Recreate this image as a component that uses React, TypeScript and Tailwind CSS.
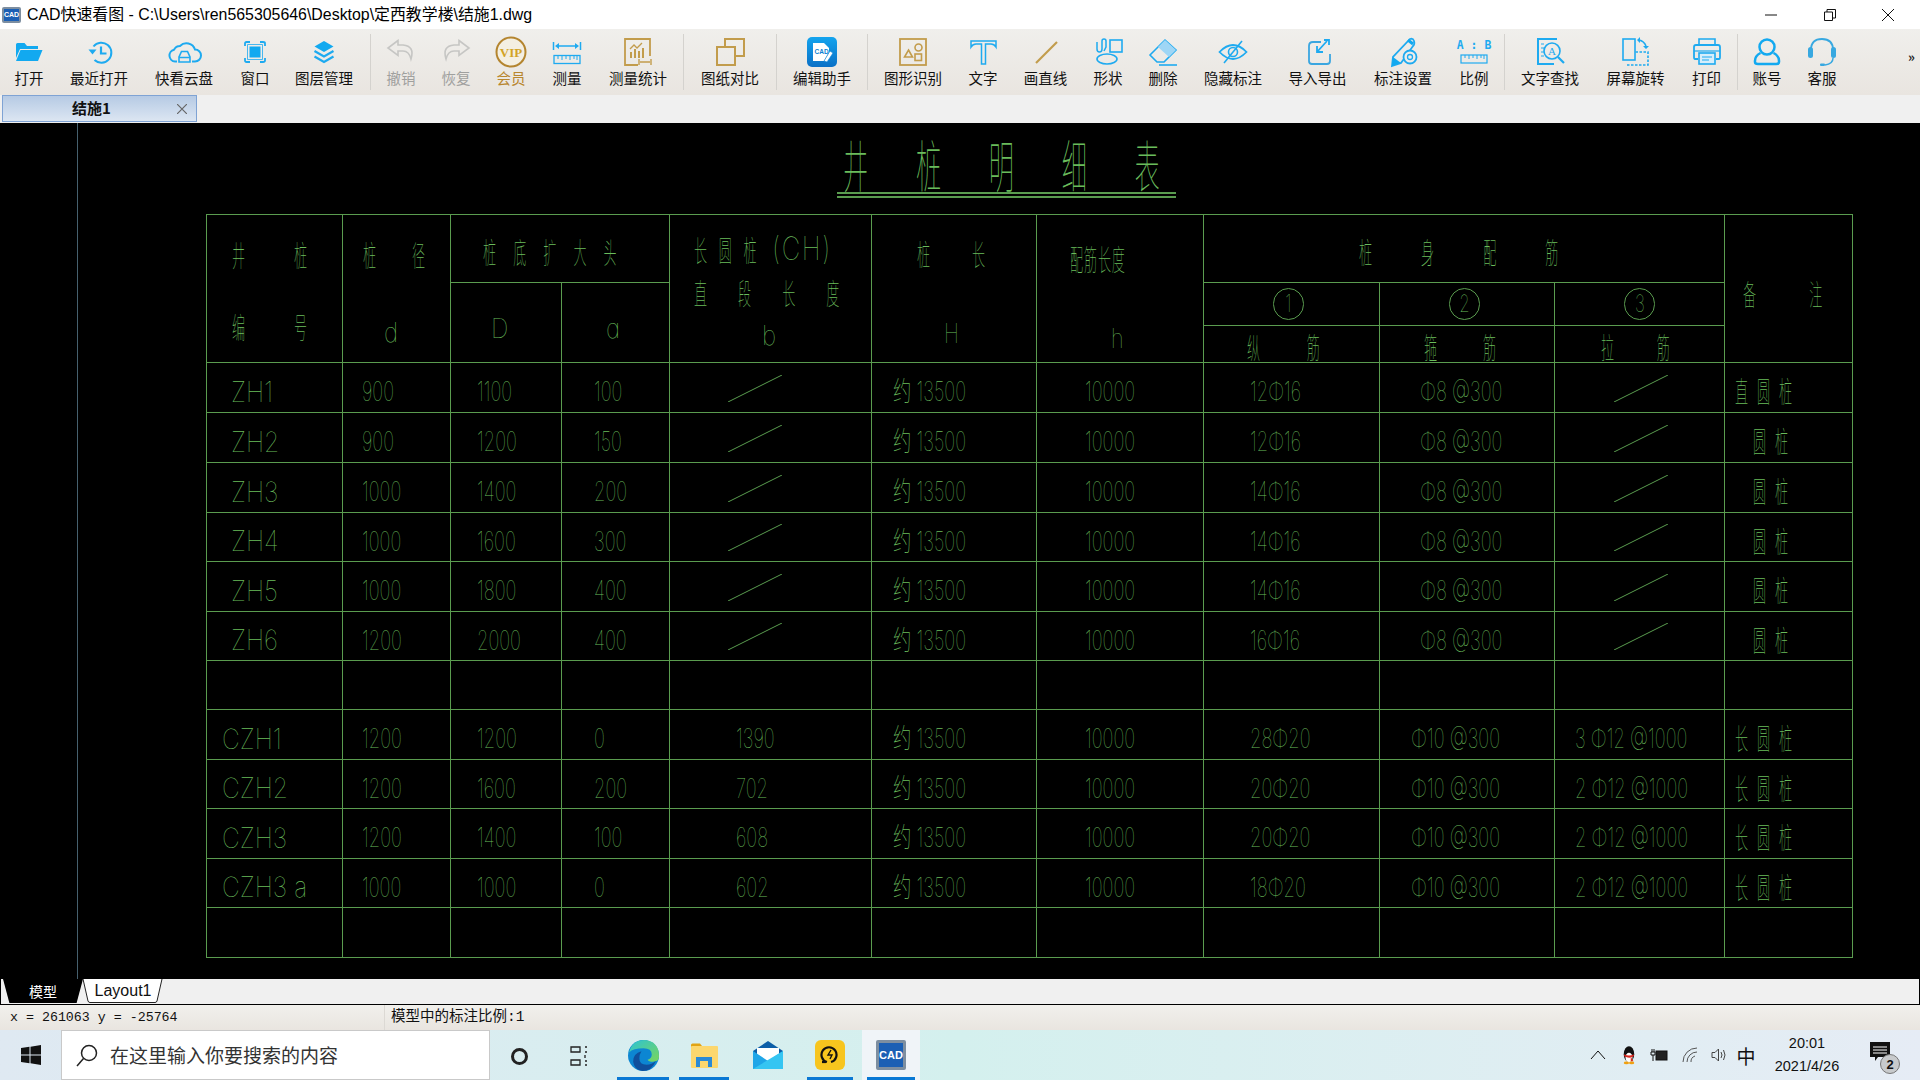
import React from "react";

const BLUE = "#1eaaf0";
const GOLD = "#c29c4c";
const GREY = "#c6c6c4";

const Ico = ({ children }: { children: React.ReactNode }) => (
  <svg viewBox="0 0 36 36" fill="none" className="w-9 h-9 shrink-0">
    {children}
  </svg>
);

const icons: Record<string, React.ReactNode> = {
  open: (
    <Ico>
      <path d="M5 10.500q0-1.500 1.500-1.500h7l2.500 3h11v3H9l-4 9z" fill="#12a9f0" />
      <path d="M9.500 16H31.500L27 27H5z" fill="#12a9f0" />
    </Ico>
  ),
  recent: (
    <Ico>
      <path d="M12.500 12.500A10 10 0 1 1 13.500 26" stroke={BLUE} strokeWidth="2" />
      <path d="M7.500 15.500h8l-4 5z" fill={BLUE} />
      <path d="M20 12.500v7h5.500" stroke={BLUE} strokeWidth="2.200" />
    </Ico>
  ),
  cloud: (
    <Ico>
      <path d="M11 27.500H9a6 6 0 0 1-1-11.800 7 7 0 0 1 6-3.700 9 9 0 0 1 15 3.500 6 6 0 0 1 0 12h-3" stroke={BLUE} strokeWidth="2" />
      <path d="M13 28v-5l2.500-5.500h6L24 23v5zM13 23.500h11" stroke={BLUE} strokeWidth="1.600" />
    </Ico>
  ),
  window: (
    <Ico>
      <rect x="12.500" y="12.500" width="11" height="11" fill="#12a9f0" />
      <path d="M8 12V9.500q0-1.500 1.500-1.500H13M23 8h3q2 0 2 1.500V12M28 24v2.500q0 1.500-2 1.500h-3M13 28H9.500Q8 28 8 26.500V24" stroke={BLUE} strokeWidth="1.800" />
      <path d="M10.500 10.500h15v15h-15z" stroke={BLUE} strokeWidth="0.800" />
    </Ico>
  ),
  layers: (
    <Ico>
      <path d="M18 7l9.500 5.500L18 18l-9.500-5.500z" fill="#12a9f0" />
      <path d="M8.500 17l9.500 5.500 9.500-5.500M8.500 22.500L18 28l9.500-5.500" stroke={BLUE} strokeWidth="2.200" />
    </Ico>
  ),
  undo: (
    <Ico>
      <path d="M15 6.500L5 14l10 7.500v-4.500h5q6 0 8 8 4-13-8-14h-5z" stroke={GREY} strokeWidth="1.600" />
    </Ico>
  ),
  redo: (
    <Ico>
      <path d="M21 6.500L31 14l-10 7.500v-4.500h-5q-6 0-8 8-4-13 8-14h5z" stroke={GREY} strokeWidth="1.600" />
    </Ico>
  ),
  vip: (
    <Ico>
      <circle cx="18" cy="18" r="14.500" fill="#f4efe2" stroke="#b4852f" strokeWidth="2" />
      <text x="18" y="22.500" textAnchor="middle" fontFamily="Liberation Serif" fontWeight="700" fontSize="13" fill="#d3a325">VIP</text>
    </Ico>
  ),
  measure: (
    <Ico>
      <path d="M4.500 8v8M31.500 8v8" stroke={BLUE} strokeWidth="1.500" />
      <path d="M9 12h18" stroke={BLUE} strokeWidth="1.500" />
      <path d="M6 12l4-3v6zM30 12l-4-3v6z" fill={BLUE} />
      <rect x="5" y="21.500" width="26" height="8" stroke={BLUE} strokeWidth="1.300" />
      <path d="M9 22v3M13 22v4M17 22v3M21 22v4M25 22v3M28 22v4" stroke={BLUE} />
    </Ico>
  ),
  stats: (
    <Ico>
      <path d="M30 22V5H5v26h13" stroke={GOLD} strokeWidth="1.800" />
      <path d="M10 15l4-4 3 3 5-5" stroke={GOLD} strokeWidth="1.300" />
      <path d="M10 18h2v6h-2zM14 15h2v9h-2zM18 17h2v7h-2zM22 14h2v10h-2z" fill={GOLD} />
      <path d="M19 25v6M31 25v6M20 28h10" stroke={GOLD} strokeWidth="1.400" />
    </Ico>
  ),
  compare: (
    <Ico>
      <path d="M13 13V5h19v17h-9" stroke={GOLD} strokeWidth="2" />
      <rect x="5" y="13" width="18" height="18" stroke={GOLD} strokeWidth="2" />
    </Ico>
  ),
  edit: (
    <Ico>
      <defs>
        <linearGradient id="ed" x1="0" y1="0" x2="0" y2="1">
          <stop offset="0" stopColor="#14a4ee" />
          <stop offset="1" stopColor="#0a70c6" />
        </linearGradient>
      </defs>
      <rect x="3" y="3" width="30" height="30" rx="5" fill="url(#ed)" />
      <path d="M9 9h11l5 5v4l-5 9H9z" fill="#fff" />
      <text x="10.500" y="20" fontFamily="Liberation Sans" fontWeight="700" fontSize="6.500" fill="#0b7fd4">CAD</text>
      <path d="M20 27l6-10 3 2-6 9z" fill="#fff" stroke="#0b7fd4" strokeWidth="0.600" />
    </Ico>
  ),
  recog: (
    <Ico>
      <rect x="5" y="5" width="26" height="26" stroke={GOLD} strokeWidth="1.800" />
      <path d="M13.500 16l4 7h-8z" stroke={GOLD} strokeWidth="1.600" />
      <circle cx="23.500" cy="13.500" r="3.500" stroke={GOLD} strokeWidth="1.600" />
      <rect x="20" y="20" width="6.500" height="6.500" stroke={GOLD} strokeWidth="1.600" />
    </Ico>
  ),
  text: (
    <Ico>
      <path d="M6 7h25v6q-2-3-5-3h-5.500v20h-4V10H11q-3 0-5 3z" stroke={BLUE} strokeWidth="1.500" />
    </Ico>
  ),
  line: (
    <Ico>
      <path d="M8 29L29 8" stroke={GOLD} strokeWidth="2.200" />
    </Ico>
  ),
  shape: (
    <Ico>
      <rect x="20" y="6" width="12" height="12" stroke={BLUE} strokeWidth="1.600" />
      <ellipse cx="17" cy="25" rx="10" ry="5" stroke={BLUE} strokeWidth="1.600" />
      <path d="M7 8v7q0 3 2.500 3t2.500-3V7q0-2 2-2t2 2v6l-2 4" stroke={BLUE} strokeWidth="1.500" />
    </Ico>
  ),
  erase: (
    <Ico>
      <path d="M5 21L20 6l11 10-12 12h-7z" stroke={BLUE} strokeWidth="1.600" />
      <path d="M13 13L20 6l11 10-7 7z" fill="#9fd6f5" />
      <path d="M14 31h18" stroke={BLUE} strokeWidth="1.600" />
    </Ico>
  ),
  hide: (
    <Ico>
      <path d="M4.500 18Q18 4 31.500 18 18 32 4.500 18z" stroke={BLUE} strokeWidth="1.800" />
      <circle cx="18" cy="18" r="4.500" stroke={BLUE} strokeWidth="1.600" />
      <path d="M9 29L27 7" stroke={BLUE} strokeWidth="1.600" />
    </Ico>
  ),
  io: (
    <Ico>
      <path d="M21 8h-8q-4 0-4 4v15q0 3 3 3h15q3 0 3-3v-7" stroke="#3aa6e0" strokeWidth="1.800" />
      <path d="M27 7L17 18M17 12v6h6M24 6h5v5" stroke={BLUE} strokeWidth="1.800" />
    </Ico>
  ),
  mark: (
    <Ico>
      <path d="M25 5q3-1 4 2t-1 5L16 29l-9 3 1-9z" stroke={BLUE} strokeWidth="1.800" />
      <path d="M7 32l1-9 8 6z" fill="#12a9f0" />
      <path d="M23 6l5 4" stroke="#12a9f0" strokeWidth="3" />
      <circle cx="25" cy="23" r="6.500" fill="#efedea" stroke={BLUE} strokeWidth="1.800" />
      <circle cx="25" cy="23" r="2.500" stroke={BLUE} strokeWidth="1.300" />
    </Ico>
  ),
  ratio: (
    <Ico>
      <text x="18" y="15" textAnchor="middle" fontFamily="DejaVu Sans Mono" fontWeight="700" fontSize="11.500" fill={BLUE}>A : B</text>
      <rect x="5" y="21" width="26" height="8" stroke={BLUE} strokeWidth="1.200" />
      <path d="M9 21v3M13 21v4M17 21v3M21 21v4M25 21v3M28 21v4" stroke={BLUE} />
    </Ico>
  ),
  find: (
    <Ico>
      <path d="M25 5H6v25h16" stroke={BLUE} strokeWidth="2" />
      <path d="M9 10h3M9 14h3M9 18h3M9 22h3" stroke={BLUE} />
      <circle cx="20" cy="17" r="8" stroke={BLUE} strokeWidth="1.600" />
      <text x="20" y="21" textAnchor="middle" fontFamily="Liberation Serif" fontSize="11" fill={BLUE}>A</text>
      <path d="M26 23l6 6" stroke={BLUE} strokeWidth="2.200" />
    </Ico>
  ),
  rotate: (
    <Ico>
      <rect x="5" y="5" width="12" height="21" stroke={BLUE} strokeWidth="1.600" />
      <path d="M9 31h21V18H17" stroke={BLUE} strokeWidth="1.600" strokeDasharray="2.500 1.500" />
      <path d="M21 6q5 1 7 6" stroke={BLUE} strokeWidth="1.600" />
      <path d="M25 12h6l-3 3zM22 3v6l-3-3z" fill={BLUE} />
    </Ico>
  ),
  print: (
    <Ico>
      <path d="M10 11V5h16v6" stroke={BLUE} strokeWidth="1.600" />
      <path d="M9 25H6q-1 0-1-2V13q0-2 2-2h22q2 0 2 2v10q0 2-1 2h-3" stroke={BLUE} strokeWidth="1.800" />
      <path d="M5 17h26" stroke={BLUE} strokeWidth="1.200" />
      <rect x="10" y="19" width="16" height="11" fill="#d6eefb" stroke={BLUE} strokeWidth="1.600" />
      <path d="M13 23h10M13 26h7" stroke={BLUE} />
    </Ico>
  ),
  user: (
    <Ico>
      <circle cx="18" cy="13" r="7.500" stroke="#12a9f0" strokeWidth="2.500" />
      <path d="M11.500 19q-6 3-5.500 9 0 2 3 2h18q3 0 3-2 .5-6-5.500-9" stroke="#12a9f0" strokeWidth="2.500" />
    </Ico>
  ),
  service: (
    <Ico>
      <path d="M7 16Q7 5 18 5t11 11" stroke="#38a8e0" strokeWidth="1.800" />
      <rect x="4" y="13" width="5" height="11" rx="2.500" fill="#38a8e0" />
      <rect x="27" y="13" width="5" height="11" rx="2.500" fill="#38a8e0" />
      <path d="M29 24q0 6-8 7" stroke="#38a8e0" strokeWidth="1.500" />
      <rect x="16" y="29.500" width="5" height="2.500" rx="1" fill="#38a8e0" />
    </Ico>
  ),
};

type Tool = { label: string; icon: string; w: string; tone?: string; sep?: boolean };

const tools: Tool[] = [
  { label: "打开", icon: "open", w: "w-[58px]" },
  { label: "最近打开", icon: "recent", w: "w-[82px]" },
  { label: "快看云盘", icon: "cloud", w: "w-[88px]" },
  { label: "窗口", icon: "window", w: "w-[54px]" },
  { label: "图层管理", icon: "layers", w: "w-[84px]", sep: true },
  { label: "撤销", icon: "undo", w: "w-[52px]", tone: "text-[#a0a09e]" },
  { label: "恢复", icon: "redo", w: "w-[58px]", tone: "text-[#a0a09e]" },
  { label: "会员", icon: "vip", w: "w-[52px]", tone: "text-[#b8862f]" },
  { label: "测量", icon: "measure", w: "w-[60px]" },
  { label: "测量统计", icon: "stats", w: "w-[82px]", sep: true },
  { label: "图纸对比", icon: "compare", w: "w-[84px]", sep: true },
  { label: "编辑助手", icon: "edit", w: "w-[82px]", sep: true },
  { label: "图形识别", icon: "recog", w: "w-[82px]" },
  { label: "文字", icon: "text", w: "w-[58px]" },
  { label: "画直线", icon: "line", w: "w-[67px]" },
  { label: "形状", icon: "shape", w: "w-[58px]" },
  { label: "删除", icon: "erase", w: "w-[52px]" },
  { label: "隐藏标注", icon: "hide", w: "w-[88px]" },
  { label: "导入导出", icon: "io", w: "w-[81px]" },
  { label: "标注设置", icon: "mark", w: "w-[90px]" },
  { label: "比例", icon: "ratio", w: "w-[52px]", sep: true },
  { label: "文字查找", icon: "find", w: "w-[82px]" },
  { label: "屏幕旋转", icon: "rotate", w: "w-[89px]" },
  { label: "打印", icon: "print", w: "w-[53px]", sep: true },
  { label: "账号", icon: "user", w: "w-[50px]" },
  { label: "客服", icon: "service", w: "w-[60px]" },
];

const CadLogo = ({ className, text }: { className: string; text: string }) => (
  <div className={`flex items-center justify-center bg-[#1b5fb4] border-2 border-[#7d8ea0] rounded-[2px] text-white font-bold font-['Liberation_Sans',sans-serif] ${className}`}>
    <span className={text}>CAD</span>
  </div>
);

const TitleBar = () => (
  <div className="h-[29px] bg-white flex items-center">
    <CadLogo className="w-[19px] h-[16px] ml-[2px]" text="text-[7px] leading-none" />
    <span className="ml-[6px] text-[15.900px] text-black font-['Liberation_Sans','Noto_Sans_CJK_SC',sans-serif]">
      CAD快速看图 - C:\Users\ren565305646\Desktop\定西教学楼\结施1.dwg
    </span>
    <div className="ml-auto flex items-center">
      <svg viewBox="0 0 12 12" className="w-3 h-3 mr-[47px]"><path d="M0 6h12" stroke="#111" /></svg>
      <svg viewBox="0 0 12 12" className="w-3 h-3 mr-[46px]"><path d="M.5 3h8v8.500h-8zM3 3V.5h8.500V9H9" stroke="#111" fill="none" /></svg>
      <svg viewBox="0 0 12 12" className="w-3 h-3 mr-[26px]"><path d="M0 0l12 12M12 0L0 12" stroke="#111" /></svg>
    </div>
  </div>
);

const Toolbar = () => (
  <div className="h-[66px] flex bg-gradient-to-b from-[#f0efec] to-[#e9e5e0] font-['Noto_Sans_CJK_SC',sans-serif]">
    {tools.map((t) => (
      <React.Fragment key={t.label}>
        <div className={`${t.w} shrink-0 flex flex-col items-center pt-[5px]`}>
          {icons[t.icon]}
          <span className={`text-[14.500px] leading-[16px] whitespace-nowrap ${t.tone ?? "text-[#111]"}`}>{t.label}</span>
        </div>
        {t.sep && <div className="w-px mx-[4px] my-[5px] bg-[#d4d2ce] shrink-0" />}
      </React.Fragment>
    ))}
    <span className="ml-auto mr-[5px] mt-[18px] text-[13px] font-bold text-[#222]">»</span>
  </div>
);

const TabStrip = () => (
  <div className="h-[28px] bg-[#f0f0f0] pl-[2px]">
    <div className="w-[195px] h-[27px] border border-[#7fa3d4] bg-gradient-to-b from-[#b6cae4] to-[#dce6f2] flex items-center relative">
      <span className="ml-[69px] text-[15px] font-bold text-[#111] font-['Noto_Sans_CJK_SC',sans-serif]">结施1</span>
      <svg viewBox="0 0 10 10" className="w-[10px] h-[10px] ml-auto mr-[9px]"><path d="M0 0l10 10M10 0L0 10" stroke="#666" strokeWidth="1.200" /></svg>
    </div>
  </div>
);

const CJK = "font-['Noto_Sans_CJK_SC',sans-serif] font-thin";
const NUM = "font-['Inter','Noto_Sans_CJK_SC',sans-serif] font-thin";

const Slash = () => (
  <svg viewBox="0 0 54 27" className="w-[54px] h-[27px]">
    <path d="M0 27L54 0" stroke="#5a9c4f" />
  </svg>
);

const cellLine = "border-r border-b border-[#5a9c4f] min-w-0";
const ink = "text-[#6abc5c] leading-none whitespace-nowrap inline-block origin-left";

// header characters are narrow: scale-x keeps the CAD look
const Hz = ({ children, className }: { children: React.ReactNode; className: string }) => (
  <span className={`${ink} ${CJK} text-[29px] scale-x-[0.45] ${className}`}>{children}</span>
);

const Lat = ({ children, className }: { children: React.ReactNode; className?: string }) => (
  <span className={`${ink} ${NUM} text-[27px] ${className ?? "scale-x-[0.7]"}`}>{children}</span>
);

const Num = ({ children, pad }: { children?: React.ReactNode; pad: string }) => (
  <div className={`${cellLine} flex items-center pt-[8px] ${pad}`}>
    {children != null && <span className={`${ink} ${NUM} text-[27px] scale-x-[0.68]`}>{children}</span>}
  </div>
);

type Row = { id?: string; d?: string; D?: string; a?: string; b?: string; bar?: string; la?: string; note?: string; zh?: boolean };

const rows: Row[] = [
  { id: "ZH1", d: "900", D: "1100", a: "100", bar: "12Φ16", la: "", note: "直圆桩", zh: true },
  { id: "ZH2", d: "900", D: "1200", a: "150", bar: "12Φ16", la: "", note: "圆桩", zh: true },
  { id: "ZH3", d: "1000", D: "1400", a: "200", bar: "14Φ16", la: "", note: "圆桩", zh: true },
  { id: "ZH4", d: "1000", D: "1600", a: "300", bar: "14Φ16", la: "", note: "圆桩", zh: true },
  { id: "ZH5", d: "1000", D: "1800", a: "400", bar: "14Φ16", la: "", note: "圆桩", zh: true },
  { id: "ZH6", d: "1200", D: "2000", a: "400", bar: "16Φ16", la: "", note: "圆桩", zh: true },
  {},
  { id: "CZH1", d: "1200", D: "1200", a: "0", b: "1390", bar: "28Φ20", la: "3 Φ12 @1000", note: "长圆桩" },
  { id: "CZH2", d: "1200", D: "1600", a: "200", b: "702", bar: "20Φ20", la: "2 Φ12 @1000", note: "长圆桩" },
  { id: "CZH3", d: "1200", D: "1400", a: "100", b: "608", bar: "20Φ20", la: "2 Φ12 @1000", note: "长圆桩" },
  { id: "CZH3 a", d: "1000", D: "1000", a: "0", b: "602", bar: "18Φ20", la: "2 Φ12 @1000", note: "长圆桩" },
  {},
];

const DataRow = ({ r }: { r: Row }) => {
  if (!r.id) {
    return (
      <>
        {Array.from({ length: 11 }).map((_, i) => (
          <div key={i} className={cellLine} />
        ))}
      </>
    );
  }
  return (
    <>
      <div className={`${cellLine} flex items-center pt-[8px] ${r.zh ? "pl-[24px]" : "pl-[15px]"}`}>
        <span className={`${ink} ${NUM} text-[28px] scale-x-[0.88]`}>{r.id}</span>
      </div>
      <Num pad="pl-[19px]">{r.d}</Num>
      <Num pad="pl-[26px]">{r.D}</Num>
      <Num pad="pl-[32px]">{r.a}</Num>
      {r.b ? (
        <Num pad="pl-[66px]">{r.b}</Num>
      ) : (
        <div className={`${cellLine} flex items-center pl-[58px] pt-[1px]`}><Slash /></div>
      )}
      <Num pad="pl-[21px]">约 13500</Num>
      <Num pad="pl-[48px]">10000</Num>
      <Num pad="pl-[46px]">{r.bar}</Num>
      <Num pad={r.b ? "pl-[31px]" : "pl-[40px]"}>{r.b ? "Φ10 @300" : "Φ8 @300"}</Num>
      {r.la ? (
        <Num pad="pl-[20px]">{r.la}</Num>
      ) : (
        <div className={`${cellLine} flex items-center pl-[59px] pt-[1px]`}><Slash /></div>
      )}
      <div className={`${cellLine} flex items-center pt-[6px] ${r.note === "圆桩" ? "pl-[28px]" : "pl-[10px]"}`}>
        <Hz className="tracking-[20px]">{r.note}</Hz>
      </div>
    </>
  );
};

const Circled = ({ n, shift }: { n: string; shift: string }) => (
  <div className={`${cellLine} flex items-center justify-center ${shift}`}>
    <div className="w-[31px] h-[32px] rounded-full border border-[#5a9c4f] flex items-center justify-center">
      <span className={`text-[#6abc5c] leading-none text-[24px] ${NUM} scale-x-[0.7]`}>{n}</span>
    </div>
  </div>
);

const PileTable = () => (
  <div className="w-[1647px] grid grid-cols-[136px_108px_111px_108px_202px_165px_167px_176px_175px_170px_128px] grid-rows-[68px_43px_37px_50px_50px_50px_49px_50px_49px_49px_50px_49px_50px_49px_50px] border-t border-l border-[#5a9c4f]">
    <div className={`${cellLine} row-span-3 flex flex-col pl-[25px] pt-[25px] gap-[43px]`}>
      <Hz className="tracking-[109px]">井桩</Hz>
      <Hz className="tracking-[109px]">编号</Hz>
    </div>
    <div className={`${cellLine} row-span-3 flex flex-col pl-[20px] pt-[25px] gap-[50px]`}>
      <Hz className="tracking-[80px]">桩径</Hz>
      <Lat className="ml-[21px] scale-x-[0.9]">d</Lat>
    </div>
    <div className={`${cellLine} col-span-2 pl-[32px] pt-[22px]`}>
      <Hz className="tracking-[38px]">桩底扩大头</Hz>
    </div>
    <div className={`${cellLine} row-span-3 flex flex-col pl-[24px] pt-[20px] gap-[15px]`}>
      <div className="flex items-center h-[28px]">
        <Hz className="tracking-[26px] w-[78px] shrink-0">长圆桩</Hz>
        <span className={`${ink} ${NUM} text-[32px] scale-x-[0.8] tracking-[2px]`}>(CH)</span>
      </div>
      <Hz className="tracking-[69px]">直段长度</Hz>
      <Lat className="ml-[68px] scale-x-[0.9]">b</Lat>
    </div>
    <div className={`${cellLine} row-span-3 flex flex-col pl-[45px] pt-[24px] gap-[52px]`}>
      <Hz className="tracking-[93px]">桩长</Hz>
      <Lat className="ml-[27px] scale-x-[0.75]">H</Lat>
    </div>
    <div className={`${cellLine} row-span-3 flex flex-col pl-[33px] pt-[29px] gap-[52px]`}>
      <Hz className="tracking-[2px]">配筋长度</Hz>
      <Lat className="ml-[41px] scale-x-[0.8]">h</Lat>
    </div>
    <div className={`${cellLine} col-span-3 pl-[155px] pt-[22px]`}>
      <Hz className="tracking-[109px]">桩身配筋</Hz>
    </div>
    <div className={`${cellLine} row-span-3 flex items-center pl-[18px] pt-[9px]`}>
      <Hz className="tracking-[118px]">备注</Hz>
    </div>

    <div className={`${cellLine} row-span-2 flex items-center pl-[40px] pt-[11px]`}>
      <Lat className="scale-x-[0.9]">D</Lat>
    </div>
    <div className={`${cellLine} row-span-2 flex items-center pl-[44px] pt-[11px]`}>
      <Lat className="scale-x-[0.9]">ɑ</Lat>
    </div>
    <Circled n="1" shift="pr-[7px]" />
    <Circled n="2" shift="pr-[6px]" />
    <Circled n="3" shift="" />

    <div className={`${cellLine} pl-[43px] pt-[6px]`}><Hz className="tracking-[104px]">纵筋</Hz></div>
    <div className={`${cellLine} pl-[44px] pt-[6px]`}><Hz className="tracking-[102px]">箍筋</Hz></div>
    <div className={`${cellLine} pl-[46px] pt-[6px]`}><Hz className="tracking-[95px]">拉筋</Hz></div>

    {rows.map((r, i) => (
      <DataRow key={i} r={r} />
    ))}
  </div>
);

const Canvas = () => (
  <div className="h-[856px] bg-black relative pl-[206px] pt-[17px] overflow-hidden">
    <div className="absolute left-[77px] top-0 bottom-0 w-px bg-[#46606e]" />
    <div className="ml-[631px] w-[339px] h-[74px]">
      <div className="h-[52px] pl-[6px]">
        <span className={`${ink} ${CJK} text-[56px] scale-x-[0.45] tracking-[106px] -mt-[5px]`}>井桩明细表</span>
      </div>
      <div className="h-[6px] border-y-2 border-[#5a9c4f]" />
    </div>
    <PileTable />
  </div>
);

const LayoutTabs = () => (
  <div className="h-[26px] bg-[#f0f0f0] border-x border-b border-black flex items-start pl-[2px]">
    <div className="w-[80px] h-[24px] bg-black text-white text-[14px] flex items-center justify-center rounded-b-[3px] [clip-path:polygon(0_0,100%_0,92%_100%,8%_100%)] font-['Noto_Sans_CJK_SC',sans-serif]">
      模型
    </div>
    <div className="w-[80px] h-[24px] relative flex items-center justify-center text-[16px] text-[#111] font-['Liberation_Sans',sans-serif]">
      <svg viewBox="0 0 80 24" className="absolute inset-0 w-[80px] h-[24px]">
        <path d="M0 0l5 22q.5 1.500 2 1.500h65q1.500 0 2-1.500L79 0" fill="#fff" stroke="#222" />
      </svg>
      <span className="relative">Layout1</span>
    </div>
  </div>
);

const StatusBar = () => (
  <div className="h-[25px] bg-gradient-to-b from-[#f1f0ec] to-[#e9e5e0] flex items-center text-[13.300px] text-[#111] font-['Liberation_Mono','Noto_Sans_CJK_SC',monospace]">
    <span className="ml-[10px] w-[374px]">x = 261063 y = -25764</span>
    <div className="w-px h-full bg-[#dcd9d4]" />
    <span className="ml-[6px] pt-[1px] text-[14.500px]">模型中的标注比例:1</span>
  </div>
);

const Running = ({ children, w, on, active }: { children: React.ReactNode; w: string; on?: boolean; active?: boolean }) => (
  <div className={`${w} h-full relative flex justify-center pt-[10px] ${active ? "bg-[#f0f4f8]" : ""}`}>
    {children}
    {on && <div className="absolute bottom-0 left-[5px] right-[5px] h-[3px] bg-[#0a78d4]" />}
  </div>
);

const Taskbar = () => (
  <div className="h-[50px] flex items-stretch bg-gradient-to-r from-[#dfe9f2] via-[#d4f0ee] to-[#e6ecf5] relative">
    <div className="w-[61px] flex items-center justify-center">
      <svg viewBox="0 0 20 20" className="w-5 h-5">
        <path d="M0 3l8.500-1.200V9.500H0zM9.500 1.700L20 0v9.500H9.500zM0 10.500h8.500v7.700L0 17zM9.500 10.500H20V20l-10.500-1.700z" fill="#111" />
      </svg>
    </div>
    <div className="w-[429px] bg-white border border-[#c9c9c9] flex items-center pl-[13px] text-[19px] text-[#333] font-['Noto_Sans_CJK_SC',sans-serif]">
      <svg viewBox="0 0 24 24" className="w-[24px] h-[24px] shrink-0" fill="none" stroke="#222" strokeWidth="1.500">
        <circle cx="14" cy="10" r="7.500" />
        <path d="M8.500 15.500L2 23" />
      </svg>
      <span className="ml-[11px]">在这里输入你要搜索的内容</span>
    </div>
    <Running w="w-[58px]">
      <div className="mt-[8px] w-[17px] h-[17px] rounded-full border-[3px] border-[#222]" />
    </Running>
    <Running w="w-[64px]">
      <svg viewBox="0 0 20 24" className="w-[20px] h-[24px] mt-[4px]" fill="none" stroke="#222" strokeWidth="1.300">
        <path d="M1 3h9v5H1zM1 16h9v5H1zM15 3h2M15 8h2M15 11v3M15 17h2M15 21h2" />
      </svg>
    </Running>
    <Running w="w-[62px]" on>
      <svg viewBox="0 0 30 30" className="w-[31px] h-[31px]">
        <defs>
          <linearGradient id="edge1" x1="0" y1="0" x2="1" y2="1">
            <stop offset="0" stopColor="#2bc3d6" />
            <stop offset="1" stopColor="#7ad65a" />
          </linearGradient>
        </defs>
        <circle cx="15" cy="15" r="15" fill="#0c86d2" />
        <path d="M1 12Q4 0 16 0q14 1 14 16 0 5-6 5-4 0-5-2 4-1 4-5 0-6-8-6-10 0-14 4z" fill="url(#edge1)" />
        <path d="M11 18q0 6 7 6 5 0 9-4-4 10-13 10-8-1-9-9 0-8 8-10-2 3-2 7z" fill="#0f4f9c" />
      </svg>
    </Running>
    <Running w="w-[60px]" on>
      <svg viewBox="0 0 28 26" className="w-[28px] h-[26px] mt-[2px]">
        <path d="M1 3q0-1.500 1.500-1.500H10L12 4v3H1z" fill="#e2a313" />
        <rect x="1" y="4" width="27" height="22" rx="1" fill="#fcd76e" />
        <path d="M6 25V15h16v10h-4v-6h-8v6z" fill="#2a8ad6" />
      </svg>
    </Running>
    <Running w="w-[68px]">
      <svg viewBox="0 0 30 28" className="w-[30px] h-[28px] mt-[1px]">
        <path d="M0 10L15 0l15 10v16H0z" fill="#0c5ea8" />
        <path d="M4 7h22v10l-11 7-11-7z" fill="#fff" />
        <path d="M0 10l15 10 15-10v18H0z" fill="#1fa6e8" />
        <path d="M0 28L30 10v18z" fill="#35c5f2" />
      </svg>
    </Running>
    <Running w="w-[56px]" on>
      <div className="w-[30px] h-[30px] rounded-[6px] bg-[#f7c51e] flex items-center justify-center">
        <svg viewBox="0 0 20 20" className="w-[20px] h-[20px]" fill="none" stroke="#111" strokeWidth="2.200">
          <path d="M7 17a7.500 7.500 0 1 1 4 0" />
          <path d="M11 5l-3 5h4l-2 4" strokeWidth="1.400" />
          <path d="M2 17h4" />
        </svg>
      </div>
    </Running>
    <div className="w-[4px]" />
    <Running w="w-[58px]" on active>
      <CadLogo className="w-[30px] h-[30px] border-[3px]" text="text-[11px] leading-none" />
    </Running>
    <div className="ml-auto flex items-center pr-[11px] text-[#111] font-['Noto_Sans_CJK_SC',sans-serif]">
      <div className="w-[30px] flex justify-center">
        <svg viewBox="0 0 16 10" className="w-[16px] h-[10px]" fill="none" stroke="#111"><path d="M1 9l7-8 7 8" /></svg>
      </div>
      <div className="w-[31px] flex justify-center">
        <svg viewBox="0 0 16 22" className="w-[14px] h-[20px]">
          <ellipse cx="8" cy="10" rx="6" ry="9" fill="#111" />
          <ellipse cx="8" cy="14" rx="4" ry="5.500" fill="#fff" />
          <path d="M2.500 10q5.500 3 11 0v2.500q-5 3-11 0z" fill="#d8281f" />
          <path d="M10 13l3 5h-3z" fill="#d8281f" />
          <ellipse cx="5" cy="20" rx="3" ry="1.500" fill="#f0a010" />
          <ellipse cx="11" cy="20" rx="3" ry="1.500" fill="#f0a010" />
        </svg>
      </div>
      <div className="w-[30px] flex justify-center">
        <svg viewBox="0 0 18 14" className="w-[18px] h-[14px]" fill="none" stroke="#111">
          <rect x="6" y="3" width="11" height="9" fill="#222" />
          <path d="M2 1v3M4 1v3M1 4h4v3H1zM3 7v6" />
        </svg>
      </div>
      <div className="w-[31px] flex justify-center">
        <svg viewBox="0 0 16 16" className="w-[16px] h-[16px]" fill="none" stroke="#555">
          <path d="M1 15A14 14 0 0 1 15 1M5 15A10 10 0 0 1 15 5M9 15a6 6 0 0 1 4-6" />
        </svg>
      </div>
      <div className="w-[28px] flex justify-center">
        <svg viewBox="0 0 16 16" className="w-[16px] h-[16px]" fill="none" stroke="#444">
          <path d="M1 5.500h3L7.500 2v12L4 10.500H1zM10 5q2 3 0 6M12.500 3q3 5 0 10" />
        </svg>
      </div>
      <div className="w-[30px] text-center text-[19px] leading-none -ml-[2px] mr-[2px]">中</div>
      <div className="w-[88px] flex flex-col items-center text-[14.500px] leading-[23px] font-['Liberation_Sans',sans-serif]">
        <span>20:01</span>
        <span>2021/4/26</span>
      </div>
      <div className="w-[58px] flex justify-center relative">
        <svg viewBox="0 0 20 20" className="w-[20px] h-[20px] -mt-[6px]">
          <path d="M0 0h20v15H8l-3 4v-4H0z" fill="#111" />
          <path d="M3 5h14M3 8h14M3 11h14" stroke="#fff" />
        </svg>
        <div className="absolute left-[29px] top-[6px] w-[20px] h-[20px] rounded-full bg-[#c8cacc] border border-[#777] flex items-center justify-center text-[13px] font-bold leading-none font-['Liberation_Sans',sans-serif]">
          2
        </div>
      </div>
    </div>
  </div>
);

export default function App() {
  return (
    <div className="w-[1920px] h-[1080px] overflow-hidden flex flex-col">
      <TitleBar />
      <Toolbar />
      <TabStrip />
      <Canvas />
      <LayoutTabs />
      <StatusBar />
      <Taskbar />
    </div>
  );
}
